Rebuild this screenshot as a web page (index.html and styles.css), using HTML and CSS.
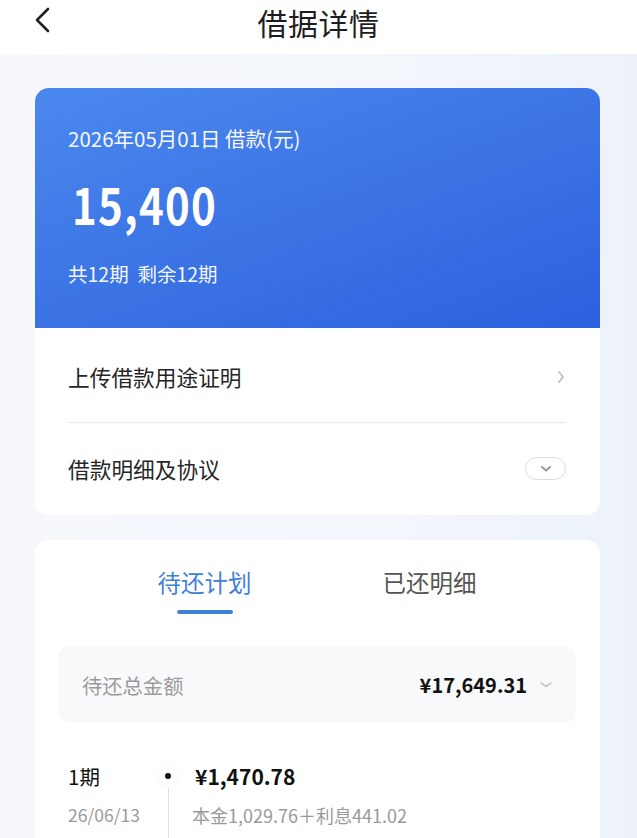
FILE: index.html
```html
<!DOCTYPE html>
<html lang="zh-CN">
<head>
<meta charset="utf-8">
<title>借据详情</title>
<link rel="stylesheet" href="styles.css">
</head>
<body>
<div class="page">
  <header class="topbar">
    <span class="back">
      <svg width="18" height="26" viewBox="0 0 18 26"><path d="M15 2 L4 13 L15 24" fill="none" stroke="#222" stroke-width="2.6" stroke-linecap="round" stroke-linejoin="round"/></svg>
    </span>
    <h1 class="title">借据详情</h1>
  </header>

  <main class="content">
    <section class="card loan">
      <div class="loan-head">
        <div class="loan-date">2026年05月01日&nbsp;借款(元)</div>
        <div class="loan-amount"><span>15,400</span></div>
        <div class="loan-terms">共12期&nbsp;&nbsp;剩余12期</div>
      </div>
      <div class="loan-rows">
        <div class="row">
          <span class="row-label">上传借款用途证明</span>
          <svg class="row-arrow" width="8" height="14" viewBox="0 0 8 14"><path d="M2 2 L6 7 L2 12" fill="none" stroke="#bdbdbd" stroke-width="1.8" stroke-linecap="round" stroke-linejoin="round"/></svg>
        </div>
        <div class="divider"></div>
        <div class="row">
          <span class="row-label">借款明细及协议</span>
          <span class="pill">
            <svg width="12" height="8" viewBox="0 0 12 8"><path d="M2 2 L6 5.5 L10 2" fill="none" stroke="#9a9a9a" stroke-width="2" stroke-linecap="round" stroke-linejoin="round"/></svg>
          </span>
        </div>
      </div>
    </section>

    <section class="card plan">
      <div class="tabs">
        <div class="tab active"><span>待还计划</span><i class="bar"></i></div>
        <div class="tab"><span>已还明细</span></div>
      </div>
      <div class="total">
        <span class="total-label">待还总金额</span>
        <span class="total-right">
          <span class="total-amount">¥17,649.31</span>
          <svg width="14" height="8" viewBox="0 0 14 8"><path d="M2 2 L7 5.5 L12 2" fill="none" stroke="#c8c8c8" stroke-width="1.6" stroke-linecap="round" stroke-linejoin="round"/></svg>
        </span>
      </div>
      <div class="period">
        <div class="p-left">
          <div class="p-num">1期</div>
          <div class="p-date">26/06/13</div>
        </div>
        <div class="p-track">
          <span class="dot"></span>
          <span class="line"></span>
        </div>
        <div class="p-right">
          <div class="p-amount">¥1,470.78</div>
          <div class="p-detail">本金1,029.76＋利息441.02</div>
        </div>
      </div>
    </section>
  </main>
</div>
</body>
</html>
```

FILE: styles.css
```css
* { box-sizing: border-box; }
html, body {
  margin: 0;
  padding: 0;
}
body {
  font-family: "Noto Sans CJK SC", "Noto Sans", sans-serif;
  color: #222;
  background: #f3f6fb;
}
.page {
  width: 637px;
  height: 838px;
  overflow: hidden;
  background: linear-gradient(to right, #f6f8fc 0%, #f3f6fb 60%, #edf1fa 100%);
}
.topbar {
  height: 54px;
  background: #fff;
  display: flex;
  align-items: flex-start;
  justify-content: center;
  position: relative;
}
.back {
  position: absolute;
  left: 33px;
  top: 7px;
  display: flex;
}
.title {
  margin: 0;
  font-size: 30px;
  font-weight: 400;
  line-height: 44px;
  color: #1e1e1e;
  letter-spacing: 0.5px;
}
.content {
  padding: 34px 37px 0 35px;
  display: flex;
  flex-direction: column;
  gap: 25px;
}
.card {
  background: #fff;
  border-radius: 14px;
  overflow: hidden;
}
.loan-head {
  height: 240px;
  background: linear-gradient(160deg, #4b88ee 0%, #3a72e4 55%, #2d60de 100%);
  color: #fff;
  padding: 36px 33px 0 33px;
}
.loan-date {
  font-size: 20.5px;
  line-height: 28px;
  opacity: 0.95;
}
.loan-amount {
  font-size: 50px;
  font-weight: 700;
  line-height: 60px;
  margin-top: 21px;
  padding-left: 4px;
}
.loan-amount span {
  display: inline-block;
  letter-spacing: 1.5px;
  transform: scaleX(0.84);
  transform-origin: left center;
}
.loan-terms {
  font-size: 19.5px;
  line-height: 26px;
  margin-top: 28px;
  opacity: 0.95;
}
.loan-rows {
  padding: 3px 34px 1px 33px;
}
.row {
  height: 91px;
  display: flex;
  align-items: center;
  justify-content: space-between;
}
.row-label {
  font-size: 21.7px;
  color: #262626;
}
.row-arrow { margin-right: 1px; }
.divider {
  height: 1px;
  background: #e9e9e9;
}
.pill {
  width: 41px;
  height: 23px;
  border: 1px solid #dcdcdc;
  border-radius: 12px;
  display: flex;
  align-items: center;
  justify-content: center;
}
.plan {
  border-radius: 14px 14px 0 0;
  padding: 0 24px 0 23px;
  height: 320px;
}
.tabs {
  display: flex;
  justify-content: center;
  padding-top: 26px;
}
.tab {
  width: 225px;
  display: flex;
  flex-direction: column;
  align-items: center;
  font-size: 23.5px;
  line-height: 32px;
  color: #555;
}
.tab.active { color: #3f80db; }
.bar {
  display: block;
  width: 56px;
  height: 4px;
  border-radius: 2px;
  background: #3f80db;
  margin-top: 12px;
}
.total {
  margin-top: 32px;
  height: 77px;
  background: #f8f9fb;
  border-radius: 12px;
  display: flex;
  align-items: center;
  justify-content: space-between;
  padding: 0 23px 0 24px;
}
.total-label {
  font-size: 20.3px;
  color: #9a9a9a;
}
.total-right {
  display: flex;
  align-items: center;
  gap: 12px;
}
.total-amount {
  font-size: 20px;
  font-weight: 700;
  color: #111;
}
.period {
  margin-top: 39px;
  padding-left: 10px;
  display: flex;
  height: 120px;
}
.p-left { width: 92px; }
.p-num {
  font-size: 20.5px;
  line-height: 28px;
  color: #111;
}
.p-date {
  font-size: 17.5px;
  line-height: 24px;
  color: #9a9a9a;
  margin-top: 13px;
}
.p-track {
  width: 16px;
  display: flex;
  flex-direction: column;
  align-items: center;
  padding-top: 11px;
}
.dot {
  width: 6px;
  height: 6px;
  border-radius: 50%;
  background: #111;
  box-shadow: 0 0 0 7px #fff, 0 1px 8px 6px rgba(0,0,0,0.05);
}
.line {
  flex: 1;
  width: 1px;
  background: #dedede;
  margin-top: 9px;
}
.p-right { padding-left: 16px; }
.p-amount {
  font-size: 21px;
  font-weight: 700;
  line-height: 28px;
  color: #111;
  padding-left: 3px;
}
.p-detail {
  font-size: 18px;
  line-height: 24px;
  color: #9a9a9a;
  margin-top: 13px;
}
```
